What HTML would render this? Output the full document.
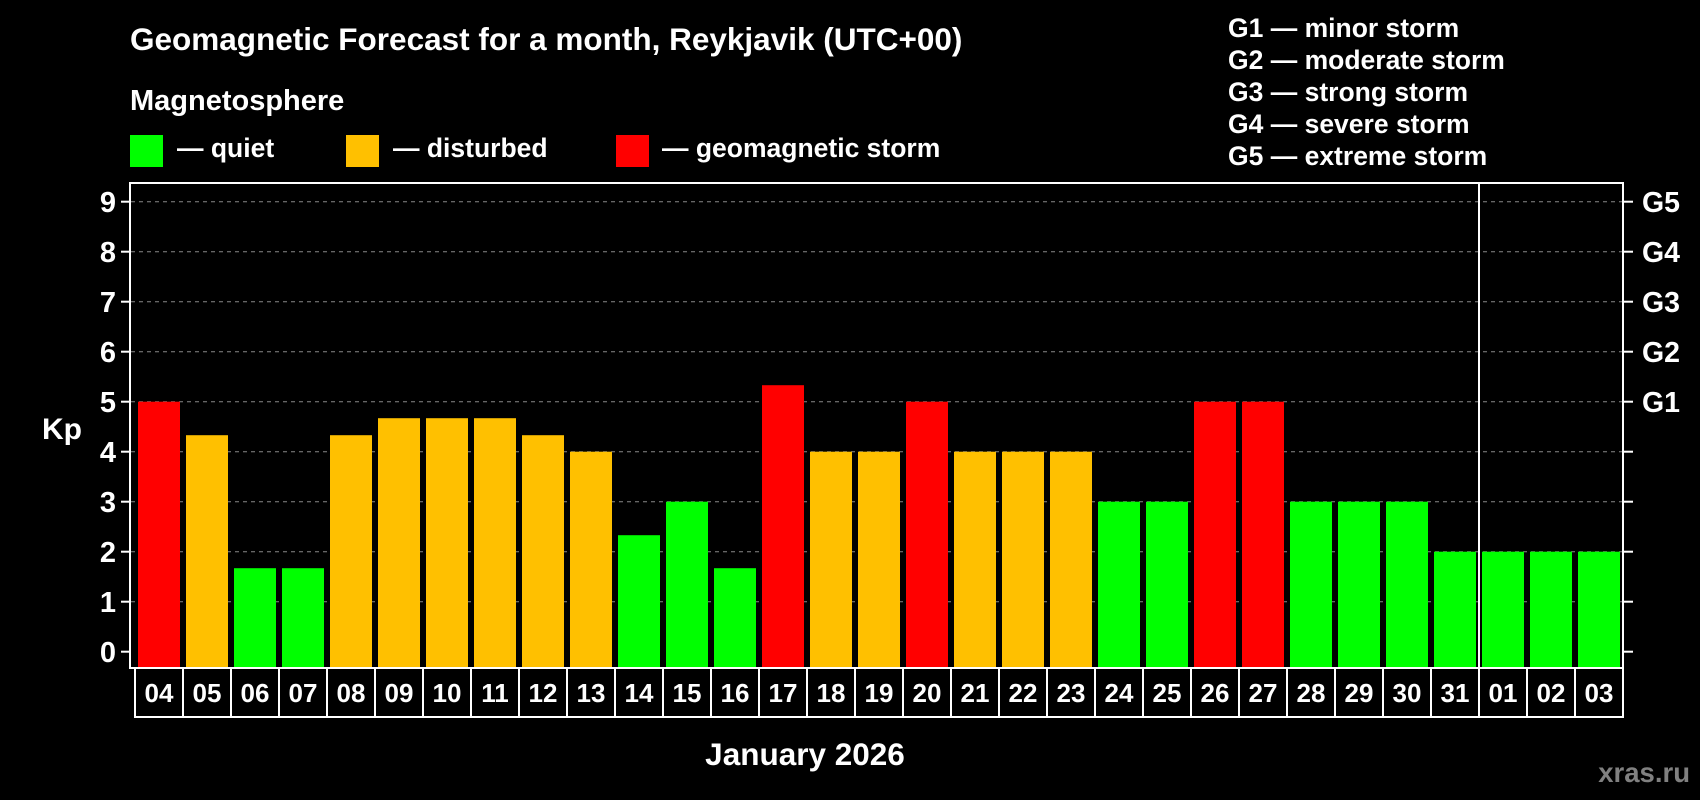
<!DOCTYPE html>
<html><head><style>
html,body{margin:0;padding:0;background:#000;width:1700px;height:800px;overflow:hidden}
svg{display:block}
text{font-family:"Liberation Sans",Arial,sans-serif;font-weight:bold;fill:#fff}
</style></head><body>
<svg width="1700" height="800" viewBox="0 0 1700 800" xmlns="http://www.w3.org/2000/svg">
<rect width="1700" height="800" fill="#000"/>
<text x="130" y="50" font-size="31.5">Geomagnetic Forecast for a month, Reykjavik (UTC+00)</text>
<text x="130" y="110" font-size="29">Magnetosphere</text>
<rect x="130" y="135" width="33" height="32" fill="#00ff00"/>
<text x="177" y="157" font-size="26.5">— quiet</text>
<rect x="346" y="135" width="33" height="32" fill="#ffc000"/>
<text x="393" y="157" font-size="26.5">— disturbed</text>
<rect x="616" y="135" width="33" height="32" fill="#ff0000"/>
<text x="662" y="157" font-size="26.5">— geomagnetic storm</text>
<g font-size="26.5">
<text x="1228" y="37">G1 — minor storm</text>
<text x="1228" y="69">G2 — moderate storm</text>
<text x="1228" y="101">G3 — strong storm</text>
<text x="1228" y="133">G4 — severe storm</text>
<text x="1228" y="165">G5 — extreme storm</text>
</g>
<g stroke="#888" stroke-width="1" stroke-dasharray="4,4">
<line x1="131" x2="1622" y1="201.7" y2="201.7"/>
<line x1="131" x2="1622" y1="251.7" y2="251.7"/>
<line x1="131" x2="1622" y1="301.7" y2="301.7"/>
<line x1="131" x2="1622" y1="351.7" y2="351.7"/>
<line x1="131" x2="1622" y1="401.7" y2="401.7"/>
<line x1="131" x2="1622" y1="451.7" y2="451.7"/>
<line x1="131" x2="1622" y1="501.7" y2="501.7"/>
<line x1="131" x2="1622" y1="551.7" y2="551.7"/>
<line x1="131" x2="1622" y1="601.7" y2="601.7"/>
</g>
<g>
<rect x="138" y="401.7" width="42" height="266.3" fill="#ff0000"/>
<rect x="186" y="435.2" width="42" height="232.8" fill="#ffc000"/>
<rect x="234" y="568.2" width="42" height="99.8" fill="#00ff00"/>
<rect x="282" y="568.2" width="42" height="99.8" fill="#00ff00"/>
<rect x="330" y="435.2" width="42" height="232.8" fill="#ffc000"/>
<rect x="378" y="418.2" width="42" height="249.8" fill="#ffc000"/>
<rect x="426" y="418.2" width="42" height="249.8" fill="#ffc000"/>
<rect x="474" y="418.2" width="42" height="249.8" fill="#ffc000"/>
<rect x="522" y="435.2" width="42" height="232.8" fill="#ffc000"/>
<rect x="570" y="451.7" width="42" height="216.3" fill="#ffc000"/>
<rect x="618" y="535.2" width="42" height="132.8" fill="#00ff00"/>
<rect x="666" y="501.7" width="42" height="166.3" fill="#00ff00"/>
<rect x="714" y="568.2" width="42" height="99.8" fill="#00ff00"/>
<rect x="762" y="385.2" width="42" height="282.8" fill="#ff0000"/>
<rect x="810" y="451.7" width="42" height="216.3" fill="#ffc000"/>
<rect x="858" y="451.7" width="42" height="216.3" fill="#ffc000"/>
<rect x="906" y="401.7" width="42" height="266.3" fill="#ff0000"/>
<rect x="954" y="451.7" width="42" height="216.3" fill="#ffc000"/>
<rect x="1002" y="451.7" width="42" height="216.3" fill="#ffc000"/>
<rect x="1050" y="451.7" width="42" height="216.3" fill="#ffc000"/>
<rect x="1098" y="501.7" width="42" height="166.3" fill="#00ff00"/>
<rect x="1146" y="501.7" width="42" height="166.3" fill="#00ff00"/>
<rect x="1194" y="401.7" width="42" height="266.3" fill="#ff0000"/>
<rect x="1242" y="401.7" width="42" height="266.3" fill="#ff0000"/>
<rect x="1290" y="501.7" width="42" height="166.3" fill="#00ff00"/>
<rect x="1338" y="501.7" width="42" height="166.3" fill="#00ff00"/>
<rect x="1386" y="501.7" width="42" height="166.3" fill="#00ff00"/>
<rect x="1434" y="551.7" width="42" height="116.3" fill="#00ff00"/>
<rect x="1482" y="551.7" width="42" height="116.3" fill="#00ff00"/>
<rect x="1530" y="551.7" width="42" height="116.3" fill="#00ff00"/>
<rect x="1578" y="551.7" width="42" height="116.3" fill="#00ff00"/>
</g>
<rect x="130" y="183" width="1493" height="485" fill="none" stroke="#fff" stroke-width="2"/>
<line x1="1479" x2="1479" y1="183" y2="668" stroke="#fff" stroke-width="2"/>
<g stroke="#fff" stroke-width="2">
<line x1="121" x2="130" y1="201.7" y2="201.7"/><line x1="121" x2="130" y1="251.7" y2="251.7"/>
<line x1="121" x2="130" y1="301.7" y2="301.7"/><line x1="121" x2="130" y1="351.7" y2="351.7"/>
<line x1="121" x2="130" y1="401.7" y2="401.7"/><line x1="121" x2="130" y1="451.7" y2="451.7"/>
<line x1="121" x2="130" y1="501.7" y2="501.7"/><line x1="121" x2="130" y1="551.7" y2="551.7"/>
<line x1="121" x2="130" y1="601.7" y2="601.7"/><line x1="121" x2="130" y1="651.7" y2="651.7"/>
<line x1="1623" x2="1633" y1="201.7" y2="201.7"/><line x1="1623" x2="1633" y1="251.7" y2="251.7"/>
<line x1="1623" x2="1633" y1="301.7" y2="301.7"/><line x1="1623" x2="1633" y1="351.7" y2="351.7"/>
<line x1="1623" x2="1633" y1="401.7" y2="401.7"/><line x1="1623" x2="1633" y1="451.7" y2="451.7"/>
<line x1="1623" x2="1633" y1="501.7" y2="501.7"/><line x1="1623" x2="1633" y1="551.7" y2="551.7"/>
<line x1="1623" x2="1633" y1="601.7" y2="601.7"/><line x1="1623" x2="1633" y1="651.7" y2="651.7"/>
</g>
<rect x="135" y="668" width="1488" height="49" fill="none" stroke="#fff" stroke-width="2"/>
<g stroke="#fff" stroke-width="2">
<line x1="183" x2="183" y1="668" y2="717"/><line x1="231" x2="231" y1="668" y2="717"/>
<line x1="279" x2="279" y1="668" y2="717"/><line x1="327" x2="327" y1="668" y2="717"/>
<line x1="375" x2="375" y1="668" y2="717"/><line x1="423" x2="423" y1="668" y2="717"/>
<line x1="471" x2="471" y1="668" y2="717"/><line x1="519" x2="519" y1="668" y2="717"/>
<line x1="567" x2="567" y1="668" y2="717"/><line x1="615" x2="615" y1="668" y2="717"/>
<line x1="663" x2="663" y1="668" y2="717"/><line x1="711" x2="711" y1="668" y2="717"/>
<line x1="759" x2="759" y1="668" y2="717"/><line x1="807" x2="807" y1="668" y2="717"/>
<line x1="855" x2="855" y1="668" y2="717"/><line x1="903" x2="903" y1="668" y2="717"/>
<line x1="951" x2="951" y1="668" y2="717"/><line x1="999" x2="999" y1="668" y2="717"/>
<line x1="1047" x2="1047" y1="668" y2="717"/><line x1="1095" x2="1095" y1="668" y2="717"/>
<line x1="1143" x2="1143" y1="668" y2="717"/><line x1="1191" x2="1191" y1="668" y2="717"/>
<line x1="1239" x2="1239" y1="668" y2="717"/><line x1="1287" x2="1287" y1="668" y2="717"/>
<line x1="1335" x2="1335" y1="668" y2="717"/><line x1="1383" x2="1383" y1="668" y2="717"/>
<line x1="1431" x2="1431" y1="668" y2="717"/><line x1="1479" x2="1479" y1="668" y2="717"/>
<line x1="1527" x2="1527" y1="668" y2="717"/><line x1="1575" x2="1575" y1="668" y2="717"/>
</g>
<g font-size="26" text-anchor="middle">
<text x="159" y="702">04</text><text x="207" y="702">05</text><text x="255" y="702">06</text>
<text x="303" y="702">07</text><text x="351" y="702">08</text><text x="399" y="702">09</text>
<text x="447" y="702">10</text><text x="495" y="702">11</text><text x="543" y="702">12</text>
<text x="591" y="702">13</text><text x="639" y="702">14</text><text x="687" y="702">15</text>
<text x="735" y="702">16</text><text x="783" y="702">17</text><text x="831" y="702">18</text>
<text x="879" y="702">19</text><text x="927" y="702">20</text><text x="975" y="702">21</text>
<text x="1023" y="702">22</text><text x="1071" y="702">23</text><text x="1119" y="702">24</text>
<text x="1167" y="702">25</text><text x="1215" y="702">26</text><text x="1263" y="702">27</text>
<text x="1311" y="702">28</text><text x="1359" y="702">29</text><text x="1407" y="702">30</text>
<text x="1455" y="702">31</text><text x="1503" y="702">01</text><text x="1551" y="702">02</text>
<text x="1599" y="702">03</text>
</g>
<g font-size="29" text-anchor="end">
<text x="116" y="212">9</text><text x="116" y="262">8</text><text x="116" y="312">7</text>
<text x="116" y="362">6</text><text x="116" y="412">5</text><text x="116" y="462">4</text>
<text x="116" y="512">3</text><text x="116" y="562">2</text><text x="116" y="612">1</text>
<text x="116" y="662">0</text>
</g>
<text x="42" y="439" font-size="30">Kp</text>
<g font-size="28.5">
<text x="1642" y="212">G5</text><text x="1642" y="262">G4</text><text x="1642" y="312">G3</text>
<text x="1642" y="362">G2</text><text x="1642" y="412">G1</text>
</g>
<text x="805" y="765" font-size="31.5" text-anchor="middle">January 2026</text>
<text x="1690" y="782" font-size="27.5" text-anchor="end" style="fill:#808080">xras.ru</text>
</svg>
</body></html>
